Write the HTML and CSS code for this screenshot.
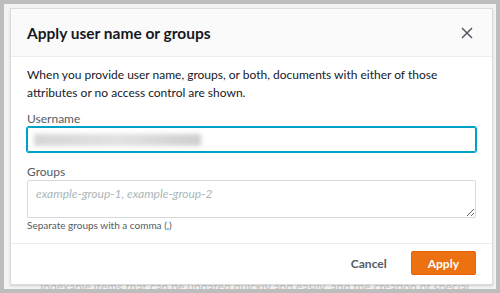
FILE: index.html
```html
<!DOCTYPE html>
<html lang="en">
<head>
  <meta charset="UTF-8" />
  <title>Apply user name or groups</title>
  <link rel="stylesheet" href="styles.css">
</head>
<body>
  <div class="screen">
    <div class="modal">
      <div class="modal-header">
        <h2>Apply user name or groups</h2>
        <button class="close" aria-label="Close">
          <svg width="12" height="12" viewBox="0 0 12 12">
            <path d="M1 1 L11 11 M11 1 L1 11" stroke="#545b64" stroke-width="1.5" fill="none" />
          </svg>
        </button>
      </div>

      <div class="modal-body">
        <p>When you provide user name, groups, or both, documents with either of those attributes or no access control are shown.</p>

        <div class="field">
          <div class="label">Username</div>
          <div class="input focused"><span class="redacted"></span></div>
        </div>

        <div class="field">
          <div class="label">Groups</div>
          <textarea placeholder="example-group-1, example-group-2"></textarea>
          <div class="hint">Separate groups with a comma (,)</div>
        </div>
      </div>

      <div class="modal-footer">
        <button class="btn-link">Cancel</button>
        <button class="btn-primary">Apply</button>
      </div>
    </div>
    <div class="page-text">Indexable items that can be updated quickly and easily, and the creation of special</div>
  </div>
</body>
</html>
```

FILE: styles.css
```css
* {
  box-sizing: border-box;
}

body {
  margin: 0;
  background: #bdbdbd;
  font-family: Lato, "Liberation Sans", sans-serif;
  color: #16191f;
}

.screen {
  height: 293px;
  border: 4px solid #bdbdbd;
  background: #f2f3f3;
  padding: 4px 3px 0 6px;
  overflow: hidden;
}

.modal {
  position: relative;
  z-index: 1;
  height: 277px;
  background: #fff;
  border: 1px solid #dcdcdc;
  box-shadow: 0 1px 2px rgba(0, 0, 0, 0.15);
}

.modal-header {
  display: flex;
  align-items: center;
  justify-content: space-between;
  height: 48px;
  padding: 0 15px 0 16px;
  background: #fafafa;
  border-bottom: 1px solid #eaeded;
}

.modal-header h2 {
  margin: 0;
  font-size: 15.5px;
  font-weight: 700;
}

.close {
  width: 20px;
  height: 20px;
  padding: 0;
  border: none;
  background: none;
  display: flex;
  align-items: center;
  justify-content: center;
}

.modal-body {
  padding: 9px 16px 10px;
  font-size: 12px;
}

.modal-body p {
  margin: 0 0 8px;
  line-height: 18px;
}

.field + .field {
  margin-top: 11px;
}

.label {
  line-height: 17px;
  color: #545b64;
}

.input {
  height: 25px;
  border: 1px solid #aab7b8;
  border-radius: 2px;
  padding: 0 6px;
  display: flex;
  align-items: center;
}

.input.focused {
  border-color: #00a1c9;
  box-shadow: 0 0 0 1px #00a1c9;
}

.redacted {
  width: 167px;
  height: 12px;
  background: linear-gradient(90deg, #d6d6d6, #e2e2e2 50%, #cfcfcf);
  filter: blur(2px);
}

textarea {
  display: block;
  width: 100%;
  height: 38px;
  border: 1px solid #d5dbdb;
  border-radius: 2px;
  padding: 5px 8px;
  font-family: inherit;
  font-size: 12px;
  resize: vertical;
}

textarea::placeholder {
  color: #aab7b8;
  font-style: italic;
}

.hint {
  font-size: 10px;
  line-height: 15px;
  color: #545b64;
}

.modal-footer {
  display: flex;
  justify-content: flex-end;
  align-items: center;
  gap: 8px;
  padding: 7px 16px;
  border-top: 1px solid #eaeded;
}

.btn-link,
.btn-primary {
  height: 24px;
  padding: 0 16px;
  font-family: inherit;
  font-size: 12px;
  font-weight: 700;
  border-radius: 2px;
}

.btn-link {
  border: none;
  background: none;
  color: #545b64;
}

.btn-primary {
  border: 1px solid #eb5f07;
  background: #ec7211;
  color: #fff;
}

.page-text {
  margin-top: -5px;
  padding-left: 30px;
  font-size: 12px;
  line-height: 13px;
  color: #c6c6c6;
  white-space: nowrap;
}
```
